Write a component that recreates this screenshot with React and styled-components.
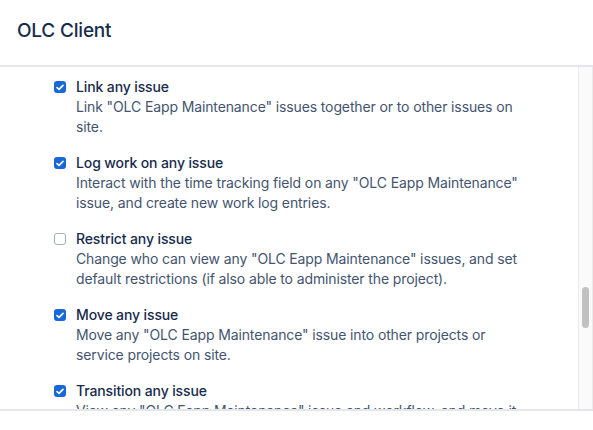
import React from 'react';
import styled, { createGlobalStyle } from 'styled-components';

const GlobalStyle = createGlobalStyle`
  html, body {
    margin: 0;
    padding: 0;
    background: #ffffff;
  }
  body {
    font-family: Inter, "Liberation Sans", sans-serif;
    -webkit-font-smoothing: antialiased;
  }
`;

const Modal = styled.div`
  width: 593px;
  height: 430px;
  display: flex;
  flex-direction: column;
  background: #ffffff;
  overflow: hidden;
`;

const Header = styled.header`
  height: 65px;
  display: flex;
  align-items: center;
  padding: 0 17px;
  border-bottom: 2px solid #e4e6ea;
  box-sizing: content-box;
`;

const Title = styled.h1`
  margin: 0;
  margin-top: -4px;
  font-size: 19px;
  font-weight: 500;
  color: #172b4d;
  letter-spacing: -0.2px;
`;

const Body = styled.div`
  height: 342px;
  display: flex;
  border-bottom: 2px solid #e4e6ea;
`;

const ScrollArea = styled.div`
  flex: 1;
  overflow: hidden;
  padding: 10px 0 0 54px;
`;

const List = styled.ul`
  list-style: none;
  margin: 0;
  padding: 0;
  display: flex;
  flex-direction: column;
  gap: 16px;
`;

const Item = styled.li`
  display: flex;
  gap: 10px;
`;

const Box = styled.span`
  flex: none;
  width: 12px;
  height: 12px;
  margin-top: 4px;
  border-radius: 3px;
  box-sizing: border-box;
  display: flex;
  align-items: center;
  justify-content: center;
  background: ${(props) => (props.checked ? '#1868db' : '#ffffff')};
  border: ${(props) => (props.checked ? 'none' : '1px solid #a5adba')};
`;

const Text = styled.div`
  max-width: 452px;
  font-size: 14px;
  line-height: 20px;
  letter-spacing: -0.12px;
`;

const Name = styled.div`
  color: #172b4d;
  font-weight: 450;
`;

const Desc = styled.div`
  color: #44546f;
`;

const Track = styled.div`
  width: 13px;
  flex: none;
  background: #fafafa;
  border-left: 1px solid #ebebeb;
  border-right: 1px solid #ebebeb;
  display: flex;
  justify-content: center;
`;

const Thumb = styled.div`
  width: 7px;
  height: 41px;
  margin-top: 220px;
  border-radius: 4px;
  background: #c1c1c1;
`;

const Footer = styled.div`
  flex: 1;
`;

const permissions = [
  {
    name: 'Link any issue',
    desc: 'Link "OLC Eapp Maintenance" issues together or to other issues on site.',
    checked: true,
  },
  {
    name: 'Log work on any issue',
    desc: 'Interact with the time tracking field on any "OLC Eapp Maintenance" issue, and create new work log entries.',
    checked: true,
  },
  {
    name: 'Restrict any issue',
    desc: 'Change who can view any "OLC Eapp Maintenance" issues, and set default restrictions (if also able to administer the project).',
    checked: false,
  },
  {
    name: 'Move any issue',
    desc: 'Move any "OLC Eapp Maintenance" issue into other projects or service projects on site.',
    checked: true,
  },
  {
    name: 'Transition any issue',
    desc: 'View any "OLC Eapp Maintenance" issue and workflow, and move it between statuses.',
    checked: true,
  },
];

const Checkbox = ({ checked }) => (
  <Box checked={checked}>
    {checked && (
      <svg width="8" height="7" viewBox="0 0 8 7">
        <polyline
          points="1,3.6 3,5.4 7,1.4"
          fill="none"
          stroke="#ffffff"
          strokeWidth="1.6"
          strokeLinecap="round"
          strokeLinejoin="round"
        />
      </svg>
    )}
  </Box>
);

const App = () => (
  <Modal>
    <GlobalStyle />
    <Header>
      <Title>OLC Client</Title>
    </Header>
    <Body>
      <ScrollArea>
        <List>
          {permissions.map((p) => (
            <Item key={p.name}>
              <Checkbox checked={p.checked} />
              <Text>
                <Name>{p.name}</Name>
                <Desc>{p.desc}</Desc>
              </Text>
            </Item>
          ))}
        </List>
      </ScrollArea>
      <Track>
        <Thumb />
      </Track>
    </Body>
    <Footer />
  </Modal>
);

export default App;
